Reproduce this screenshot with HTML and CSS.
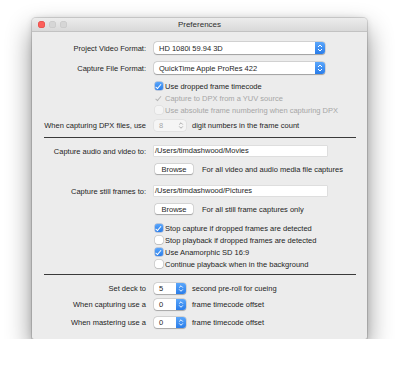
FILE: index.html
```html
<!DOCTYPE html>
<html lang="en">
<head>
  <meta charset="UTF-8" />
  <title>Preferences</title>
  <link rel="stylesheet" href="styles.css">
</head>
<body>

  <div class="window">
    <div class="titlebar">
      <div class="lights"><i class="close"></i><i></i><i></i></div>
      <div class="title">Preferences</div>
    </div>

    <div class="content">
      <div class="row mt10">
        <span class="lbl">Project Video Format:</span>
        <div class="popup"><span class="val">HD 1080i 59.94 3D</span><span class="arrows"><svg viewBox="0 0 10 12"><path d="M3 5 L5 3 L7 5 M3 7 L5 9 L7 7"/></svg></span></div>
      </div>
      <div class="row mt8">
        <span class="lbl">Capture File Format:</span>
        <div class="popup"><span class="val">QuickTime Apple ProRes 422</span><span class="arrows"><svg viewBox="0 0 10 12"><path d="M3 5 L5 3 L7 5 M3 7 L5 9 L7 7"/></svg></span></div>
      </div>

      <div class="row check mt6"><span class="box on"></span>Use dropped frame timecode</div>
      <div class="row check dim"><span class="box on off-state"></span>Capture to DPX from a YUV source</div>
      <div class="row check dim"><span class="box blank"></span>Use absolute frame numbering when capturing DPX</div>

      <div class="row mt3">
        <span class="lbl">When capturing DPX files, use</span>
        <div class="stepper disabled"><span class="num">8</span><span class="arrows"><svg viewBox="0 0 10 12"><path d="M3 5 L5 3 L7 5 M3 7 L5 9 L7 7"/></svg></span></div>
        <span class="after">digit numbers in the frame count</span>
      </div>

      <div class="sep mt6"></div>

      <div class="row mt7">
        <span class="lbl">Capture audio and video to:</span>
        <div class="field">/Users/timdashwood/Movies</div>
      </div>
      <div class="row mt6 indent">
        <button class="btn">Browse</button>
        <span class="hint">For all video and audio media file captures</span>
      </div>

      <div class="row mt10">
        <span class="lbl">Capture still frames to:</span>
        <div class="field">/Users/timdashwood/Pictures</div>
      </div>
      <div class="row mt6 indent">
        <button class="btn">Browse</button>
        <span class="hint">For all still frame captures only</span>
      </div>

      <div class="row check mt7"><span class="box on"></span>Stop capture if dropped frames are detected</div>
      <div class="row check"><span class="box"></span>Stop playback if dropped frames are detected</div>
      <div class="row check"><span class="box on"></span>Use Anamorphic SD 16:9</div>
      <div class="row check"><span class="box"></span>Continue playback when in the background</div>

      <div class="sep mt4"></div>

      <div class="row mt7">
        <span class="lbl">Set deck to</span>
        <div class="stepper"><span class="num">5</span><span class="arrows"><svg viewBox="0 0 10 12"><path d="M3 5 L5 3 L7 5 M3 7 L5 9 L7 7"/></svg></span></div>
        <span class="after">second pre-roll for cueing</span>
      </div>
      <div class="row mt4">
        <span class="lbl">When capturing use a</span>
        <div class="stepper"><span class="num">0</span><span class="arrows"><svg viewBox="0 0 10 12"><path d="M3 5 L5 3 L7 5 M3 7 L5 9 L7 7"/></svg></span></div>
        <span class="after">frame timecode offset</span>
      </div>
      <div class="row mt6">
        <span class="lbl">When mastering use a</span>
        <div class="stepper"><span class="num">0</span><span class="arrows"><svg viewBox="0 0 10 12"><path d="M3 5 L5 3 L7 5 M3 7 L5 9 L7 7"/></svg></span></div>
        <span class="after">frame timecode offset</span>
      </div>
    </div>
  </div>

</body>
</html>
```

FILE: styles.css
```css
body {
  margin: 0;
  background: #fff;
  font-family: 'Liberation Sans', Arial, sans-serif;
  font-size: 7.5px;
  color: #1e1e1e;
}
.window {
  margin: 18px 0 0 32px;
  width: 335px;
  height: 321px;
  background: #ececec;
  border-radius: 4px 4px 2px 2px;
  box-shadow: 0 12px 26px rgba(0, 0, 0, 0.45), 0 0 6px rgba(0, 0, 0, 0.12), 0 0 0 1px rgba(0, 0, 0, 0.12);
  overflow: hidden;
}
.titlebar {
  height: 13px;
  display: grid;
  grid-template-columns: 1fr auto 1fr;
  align-items: center;
  background: linear-gradient(#ececec, #d9d9d9);
  border-bottom: 1px solid #c2c2c2;
}
.lights {
  display: flex;
  gap: 4px;
  padding-left: 6px;
}
.lights i {
  width: 7px;
  height: 7px;
  border-radius: 50%;
  background: #d6d6d6;
  box-shadow: inset 0 0 0 0.5px #c4c4c4;
}
.lights i.close {
  background: #fc5f5a;
  box-shadow: inset 0 0 0 0.5px #de4541;
}
.title {
  color: #2e2e2e;
  font-size: 8px;
}
.row {
  display: flex;
  align-items: center;
  height: 12px;
  white-space: nowrap;
}
.lbl {
  width: 122px;
  padding-right: 8px;
  box-sizing: border-box;
  text-align: right;
}
.mt3 { margin-top: 3px; }
.mt4 { margin-top: 4px; }
.mt6 { margin-top: 6px; }
.mt7 { margin-top: 7px; }
.mt8 { margin-top: 8px; }
.mt10 { margin-top: 10px; }

.popup {
  width: 171px;
  height: 12px;
  display: flex;
  align-items: center;
  background: #fff;
  border-radius: 3px;
  box-shadow: 0 0 0 0.5px rgba(0, 0, 0, 0.18), 0 0.5px 1px rgba(0, 0, 0, 0.25);
}
.popup .val {
  flex: 1;
  padding-left: 5px;
}
.arrows {
  width: 10px;
  height: 100%;
  display: flex;
  border-radius: 0 3px 3px 0;
  background: linear-gradient(#5aa6fb, #2a7de9);
}
.arrows svg {
  width: 10px;
  height: 100%;
  fill: none;
  stroke: #fff;
  stroke-width: 1;
}
.check {
  padding-left: 123px;
}
.box {
  width: 8px;
  height: 8px;
  margin-right: 2px;
  box-sizing: border-box;
  border-radius: 2px;
  background: #fff;
  box-shadow: 0 0 0 0.5px rgba(0, 0, 0, 0.22), 0 0.5px 0.5px rgba(0, 0, 0, 0.15);
  position: relative;
}
.box.on {
  background: linear-gradient(#5aa6fb, #2a7de9);
  box-shadow: 0 0 0 0.5px rgba(0, 60, 160, 0.4);
}
.box.on::after {
  content: "";
  position: absolute;
  left: 2px;
  top: 0.5px;
  width: 2px;
  height: 4.5px;
  border: solid #fff;
  border-width: 0 1.2px 1.2px 0;
  transform: rotate(40deg);
}
.box.off-state {
  background: transparent;
  box-shadow: none;
}
.box.off-state::after {
  border-color: #b5b5b5;
}
.box.blank {
  background: #f4f4f4;
  box-shadow: 0 0 0 0.5px rgba(0, 0, 0, 0.08);
}
.dim {
  color: #a6a6a6;
}
.stepper {
  width: 32px;
  height: 11px;
  display: flex;
  align-items: center;
  background: #fff;
  border-radius: 3px;
  box-shadow: 0 0 0 0.5px rgba(0, 0, 0, 0.18), 0 0.5px 1px rgba(0, 0, 0, 0.22);
}
.stepper .num {
  flex: 1;
  padding-left: 5px;
}
.stepper.disabled {
  background: #f5f5f5;
  box-shadow: 0 0 0 0.5px rgba(0, 0, 0, 0.08);
  color: #a6a6a6;
}
.stepper.disabled .arrows {
  background: none;
}
.stepper.disabled .arrows svg {
  stroke: #a6a6a6;
}
.after {
  margin-left: 6px;
}
.field {
  width: 173px;
  height: 10px;
  line-height: 10px;
  padding-left: 1px;
  box-sizing: border-box;
  background: #fff;
  box-shadow: 0 0 0 0.5px #cfcfcf;
}
.indent {
  padding-left: 123px;
}
.btn {
  width: 38px;
  height: 10px;
  padding: 0;
  border: none;
  border-radius: 2px;
  background: #fff;
  font-family: inherit;
  font-size: 7.5px;
  color: #1e1e1e;
  box-shadow: 0 0 0 0.5px rgba(0, 0, 0, 0.15), 0 0.5px 1px rgba(0, 0, 0, 0.25);
}
.hint {
  margin-left: 9px;
}
.sep {
  height: 1px;
  margin-left: 12px;
  margin-right: 11px;
  background: #3a3a3a;
}
```
